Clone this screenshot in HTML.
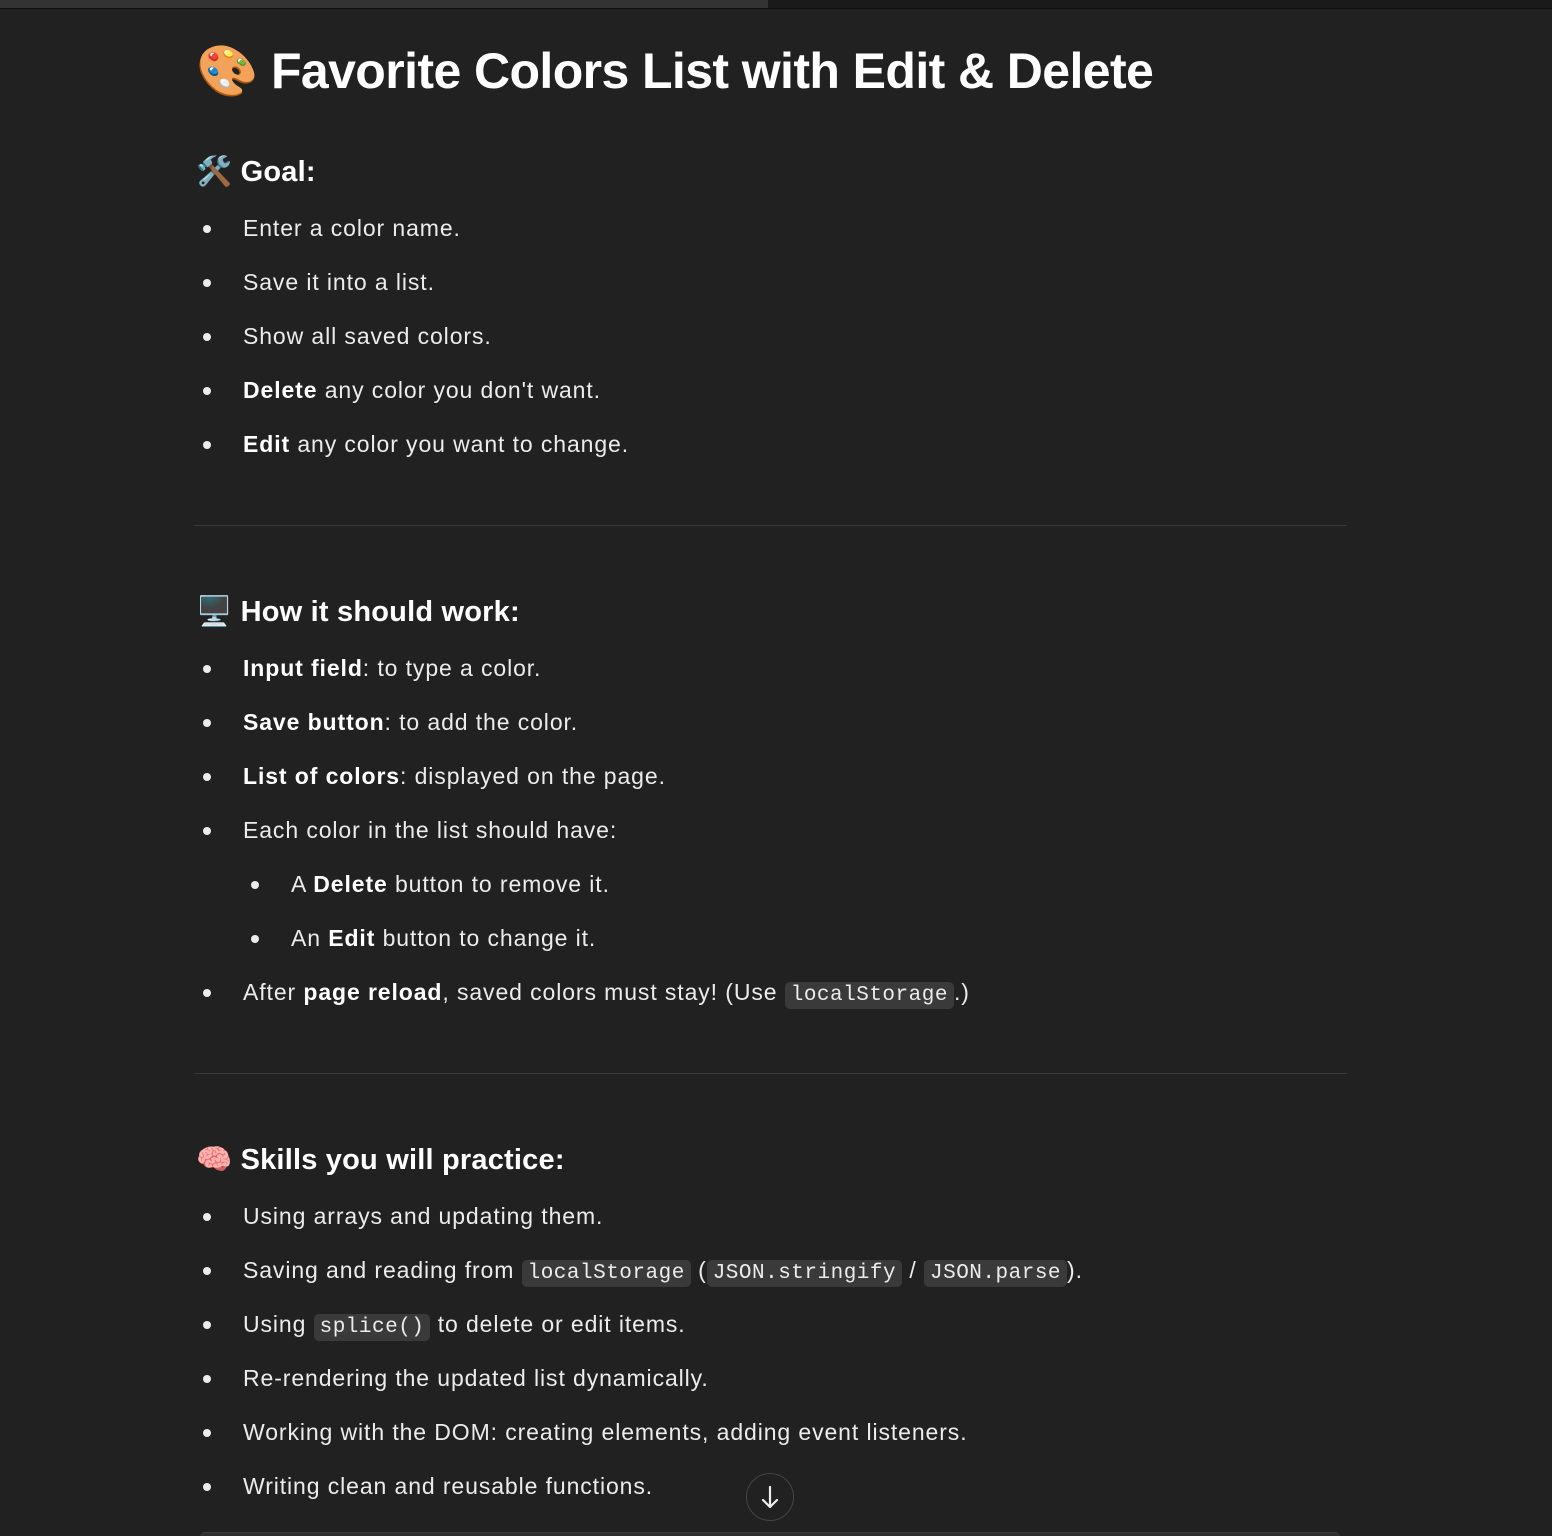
<!DOCTYPE html>
<html style="overflow:hidden"><head><meta charset="utf-8"><style>
html,body{overflow:hidden;height:1536px}
body{margin:0;width:1552px;height:1536px;background:#212121;color:#ececec;font-family:"Liberation Sans","Noto Sans CJK JP",sans-serif;overflow:hidden;position:relative}
.t{position:absolute;white-space:nowrap}
.b{font-size:23px;left:243px;letter-spacing:0.9px}
.d{position:absolute;width:8px;height:8px;border-radius:50%;background:#ececec}
h1,h3{margin:0;position:absolute;white-space:nowrap;color:#fff;font-weight:bold}
h1{font-size:50px;left:196px;top:42px;letter-spacing:-0.6px}
h3{font-size:29px;left:196px;letter-spacing:0.2px}
b{font-weight:bold;color:#fff}
code{font-family:"Liberation Mono",monospace;font-size:21px;background:#3a3a3a;border-radius:5px;padding:2px 6px;color:#ececec;letter-spacing:0.5px}
.hr{position:absolute;left:194px;width:1153px;height:1px;background:#383838}
</style></head><body>
<div style="position:absolute;left:0;top:0;width:768px;height:8px;background:#333"></div>
<div style="position:absolute;left:768px;top:0;width:784px;height:8px;background:#1a1a1a"></div>
<div style="position:absolute;left:0;top:8px;width:1552px;height:1px;background:#111"></div>
<h1>🎨 Favorite Colors List with Edit &amp; Delete</h1>
<h3 style="top:155px">🛠️ Goal:</h3>
<div class="d" style="left:203px;top:225px"></div><div class="t b" style="top:215px">Enter a color name.</div>
<div class="d" style="left:203px;top:279px"></div><div class="t b" style="top:269px">Save it into a list.</div>
<div class="d" style="left:203px;top:333px"></div><div class="t b" style="top:323px">Show all saved colors.</div>
<div class="d" style="left:203px;top:387px"></div><div class="t b" style="top:377px"><b>Delete</b> any color you don't want.</div>
<div class="d" style="left:203px;top:441px"></div><div class="t b" style="top:431px"><b>Edit</b> any color you want to change.</div>
<div class="hr" style="top:525px"></div>
<h3 style="top:595px">🖥️ How it should work:</h3>
<div class="d" style="left:203px;top:665px"></div><div class="t b" style="top:655px"><b>Input field</b>: to type a color.</div>
<div class="d" style="left:203px;top:719px"></div><div class="t b" style="top:709px"><b>Save button</b>: to add the color.</div>
<div class="d" style="left:203px;top:773px"></div><div class="t b" style="top:763px"><b>List of colors</b>: displayed on the page.</div>
<div class="d" style="left:203px;top:827px"></div><div class="t b" style="top:817px">Each color in the list should have:</div>
<div class="d" style="left:251px;top:881px"></div><div class="t b" style="left:291px;top:871px">A <b>Delete</b> button to remove it.</div>
<div class="d" style="left:251px;top:935px"></div><div class="t b" style="left:291px;top:925px">An <b>Edit</b> button to change it.</div>
<div class="d" style="left:203px;top:989px"></div><div class="t b" style="top:979px">After <b>page reload</b>, saved colors must stay! (Use <code>localStorage</code>.)</div>
<div class="hr" style="top:1073px"></div>
<h3 style="top:1143px">🧠 Skills you will practice:</h3>
<div class="d" style="left:203px;top:1213px"></div><div class="t b" style="top:1203px">Using arrays and updating them.</div>
<div class="d" style="left:203px;top:1267px"></div><div class="t b" style="top:1257px">Saving and reading from <code>localStorage</code> (<code>JSON.stringify</code> / <code>JSON.parse</code>).</div>
<div class="d" style="left:203px;top:1321px"></div><div class="t b" style="top:1311px">Using <code>splice()</code> to delete or edit items.</div>
<div class="d" style="left:203px;top:1375px"></div><div class="t b" style="top:1365px">Re-rendering the updated list dynamically.</div>
<div class="d" style="left:203px;top:1429px"></div><div class="t b" style="top:1419px">Working with the DOM: creating elements, adding event listeners.</div>
<div class="d" style="left:203px;top:1483px"></div><div class="t b" style="top:1473px">Writing clean and reusable functions.</div>
<div style="position:absolute;left:746px;top:1473px;width:46px;height:46px;border-radius:50%;border:1px solid #444;background:#212121">
<svg width="46" height="46" viewBox="0 0 46 46"><path d="M23 13v20M16 26l7 7 7-7" stroke="#eee" stroke-width="2.2" fill="none" stroke-linecap="round" stroke-linejoin="round"/></svg></div>
<div style="position:absolute;left:200px;top:1532px;width:1140px;height:4px;border-radius:18px 18px 0 0;background:#303030;border-top:1px solid #3c3c3c"></div>
</body></html>
